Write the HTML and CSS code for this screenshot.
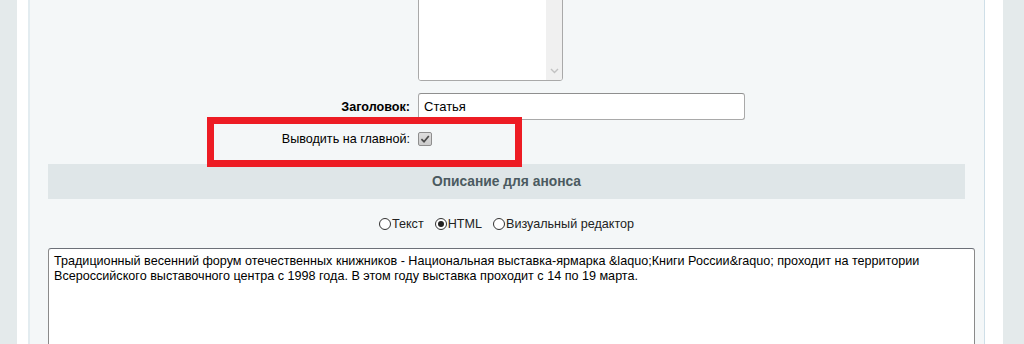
FILE: index.html
```html
<!DOCTYPE html>
<html lang="ru">
<head>
    <meta charset="UTF-8">
    <meta name="viewport" content="width=device-width, initial-scale=1.0">
    <title>Редактирование статьи</title>
    <link rel="stylesheet" href="styles.css">
</head>
<body>
    <div class="page">
        <div class="side"></div>
        <div class="gutter"></div>
        <div class="panel">
            <div class="form">
                <!-- textarea above (cut off) -->
                <div class="row row-area">
                    <div class="label"></div>
                    <div class="field">
                        <div class="small-area">
                            <textarea class="area"></textarea>
                            <div class="scroll">
                                <svg width="9" height="6" viewBox="0 0 9 6"><path d="M1 1 L4.5 4.5 L8 1" fill="none" stroke="#c2c2c2" stroke-width="1.4"/></svg>
                            </div>
                        </div>
                    </div>
                </div>
                <div class="row row-title">
                    <label class="label bold" for="title">Заголовок:</label>
                    <div class="field"><input class="text-input" id="title" type="text" value="Статья"></div>
                </div>
                <div class="row row-check">
                    <label class="label">Выводить на главной:</label>
                    <div class="field">
                        <span class="check">
                            <svg width="12" height="12" viewBox="0 0 12 12"><path d="M2.4 6.2 L5 8.7 L9.8 3" fill="none" stroke="#4a4a4a" stroke-width="1.7"/></svg>
                        </span>
                    </div>
                    <div class="mark"></div>
                </div>

                <div class="heading">Описание для анонса</div>

                <div class="types">
                    <span class="type"><span class="radio"></span>Текст</span>
                    <span class="type"><span class="radio on"></span>HTML</span>
                    <span class="type"><span class="radio"></span>Визуальный редактор</span>
                </div>

                <textarea class="preview">Традиционный весенний форум отечественных книжников - Национальная выставка-ярмарка &amp;laquo;Книги России&amp;raquo; проходит на территории Всероссийского выставочного центра с 1998 года. В этом году выставка проходит с 14 по 19 марта.</textarea>
            </div>
        </div>
        <div class="gutter gutter-right"></div>
        <div class="side side-right"></div>
    </div>
</body>
</html>
```

FILE: styles.css
```css
body{
    margin: 0;
    font-family: "Liberation Sans", Arial, sans-serif;
    font-size: 12.6px;
    color: #000;
}
.page{
    display: flex;
    height: 344px;
    overflow: hidden;
}
.side{
    width: 17px;
    background-color: #e4eaeb;
}
.side-right{
    width: 21px;
}
.gutter{
    width: 11px;
    background-color: #fff;
}
.gutter-right{
    width: 18px;
}
.panel{
    flex: 1;
    background-color: #f4f7f8;
    border-left: 2px solid #e3ecf0;
    border-right: 1px solid #cfdfe8;
    padding: 0 9px 0 18px;
}
.form{
    margin-top: -10px;
}
.row{
    display: grid;
    grid-template-columns: 362px 1fr;
    column-gap: 8px;
    align-items: center;
}
.label{
    text-align: right;
}
.bold{
    font-weight: bold;
}

/* small textarea */
.small-area{
    display: flex;
    width: 143px;
    height: 89px;
    border: 1px solid #a9a9a9;
    border-radius: 3px;
    background-color: #fff;
    overflow: hidden;
}
.area{
    flex: 1;
    border: none;
    resize: none;
    outline: none;
    padding: 0;
}
.scroll{
    width: 16px;
    background-color: #f0f0f0;
    display: flex;
    align-items: flex-end;
    justify-content: center;
    padding-bottom: 6px;
    box-sizing: border-box;
}

.row-title{
    margin-top: 12px;
}
.text-input{
    width: 327px;
    height: 27px;
    box-sizing: border-box;
    border: 1px solid #a9a9a9;
    border-top-color: #8f8f8f;
    border-radius: 3px;
    padding: 0 5px;
    font-family: "Liberation Sans", Arial, sans-serif;
    font-size: 13px;
    color: #000;
}

.row-check{
    margin-top: 12px;
    height: 14px;
    position: relative;
}
.check{
    display: block;
    width: 14px;
    height: 14px;
    box-sizing: border-box;
    border: 1px solid #8e8e8e;
    border-radius: 2px;
    background: linear-gradient(#dedede, #cccccc);
}
.check svg{
    display: block;
    margin: 0;
}
/* red highlight frame */
.mark{
    position: absolute;
    left: 159px;
    top: -15px;
    width: 315px;
    height: 50px;
    box-sizing: border-box;
    border: 7px solid #ed1c24;
}

.heading{
    margin: 18px 10px 0 0;
    height: 35px;
    line-height: 35px;
    background-color: #dfe6e8;
    text-align: center;
    font-size: 13.8px;
    font-weight: bold;
    color: #4b5a60;
}

.types{
    margin-right: 10px;
    height: 49px;
    display: flex;
    align-items: center;
    justify-content: center;
    gap: 11px;
    color: #222;
}
.type{
    display: flex;
    align-items: center;
    gap: 1px;
}
.radio{
    width: 12px;
    height: 12px;
    box-sizing: border-box;
    border: 1px solid #333;
    border-radius: 50%;
    background-color: #fff;
    position: relative;
}
.radio.on::after{
    content: "";
    position: absolute;
    left: 2px;
    top: 2px;
    width: 6px;
    height: 6px;
    border-radius: 50%;
    background-color: #222;
}

.preview{
    display: block;
    width: 927px;
    height: 140px;
    box-sizing: border-box;
    border: 1px solid #8a8a8a;
    border-top-color: #6c7078;
    border-radius: 3px;
    padding: 5px 5px;
    resize: none;
    font-family: "Liberation Sans", Arial, sans-serif;
    font-size: 12.6px;
    line-height: 15px;
    color: #000;
}
```
